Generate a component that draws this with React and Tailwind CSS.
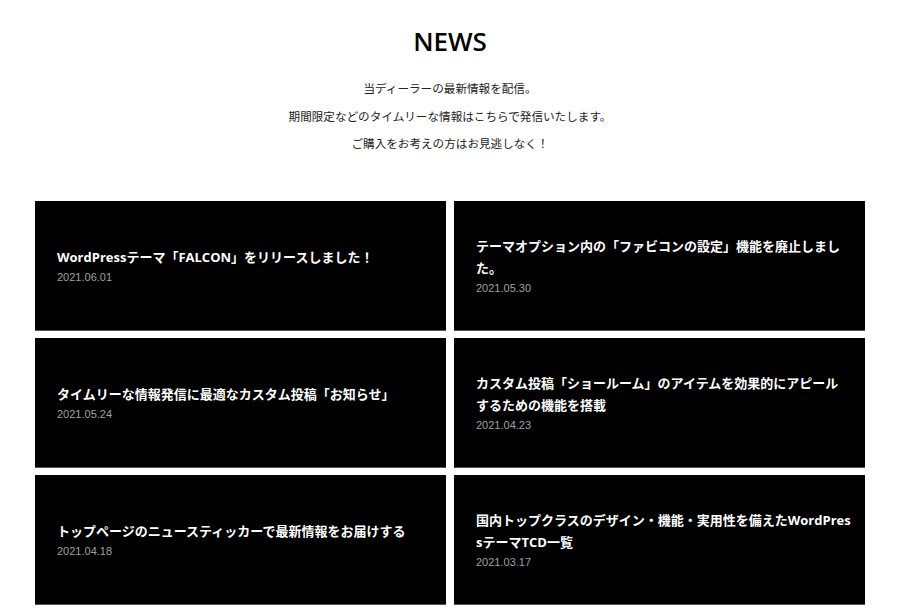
import React from "react";

const items = [
  { t: "WordPressテーマ「FALCON」をリリースしました！", d: "2021.06.01" },
  { t: "テーマオプション内の「ファビコンの設定」機能を廃止しました。", d: "2021.05.30" },
  { t: "タイムリーな情報発信に最適なカスタム投稿「お知らせ」", d: "2021.05.24" },
  { t: "カスタム投稿「ショールーム」のアイテムを効果的にアピールするための機能を搭載", d: "2021.04.23" },
  { t: "トップページのニュースティッカーで最新情報をお届けする", d: "2021.04.18" },
  { t: "国内トップクラスのデザイン・機能・実用性を備えたWordPressテーマTCD一覧", d: "2021.03.17" },
];

export default function App() {
  return (
    <div className="w-[900px] h-[610px] bg-white overflow-hidden pt-[22px]">
      <h1 className="text-center text-[26px] leading-[38px] font-semibold text-black font-['Open_Sans','Noto_Sans_CJK_JP',sans-serif]">
        NEWS
      </h1>
      <div className="mt-[16px] text-center text-[11.6px] leading-[27.5px] text-[#222] font-['Liberation_Serif','Noto_Sans_CJK_JP',serif]">
        <p>当ディーラーの最新情報を配信。</p>
        <p>期間限定などのタイムリーな情報はこちらで発信いたします。</p>
        <p>ご購入をお考えの方はお見逃しなく！</p>
      </div>
      <div className="mx-[35px] mt-[42px] grid grid-cols-2 gap-x-[8px] gap-y-[7px]">
        {items.map((it, i) => (
          <div
            key={i}
            className="h-[130px] bg-black flex flex-col justify-center pl-[22px] pr-[14px] border-b border-[#555]"
          >
            <p className="text-white text-[13px] leading-[22px] font-bold break-all font-['Open_Sans','Noto_Sans_CJK_JP',sans-serif]">
              {it.t}
            </p>
            <p className="text-[#a0a0a0] text-[11px] leading-[16px] mt-[1px] font-['Liberation_Sans',Arial,sans-serif]">
              {it.d}
            </p>
          </div>
        ))}
      </div>
    </div>
  );
}
